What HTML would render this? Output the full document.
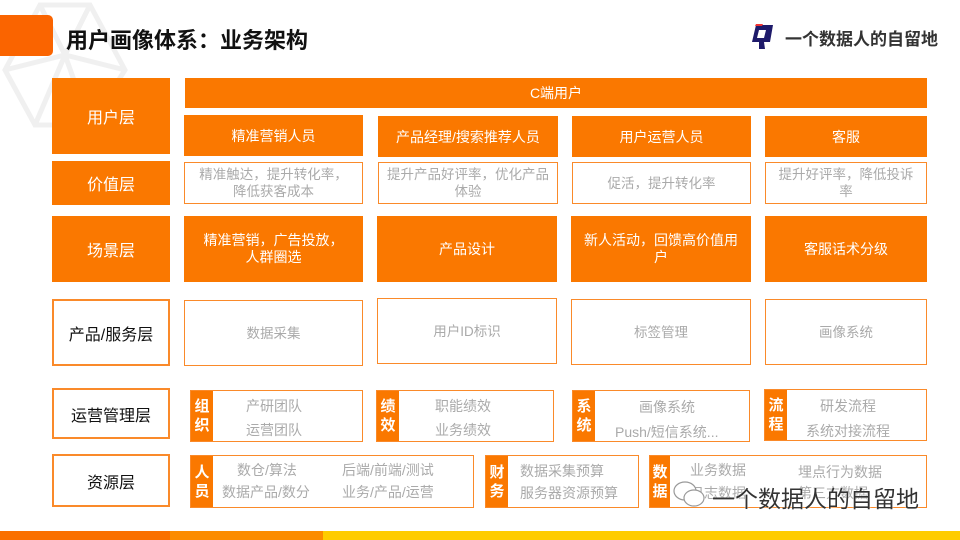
<!DOCTYPE html>
<html><head><meta charset="utf-8"><style>
*{margin:0;padding:0;box-sizing:border-box}
body{width:960px;height:540px;position:relative;overflow:hidden;background:#fff;font-family:"Liberation Sans","Noto Sans CJK SC",sans-serif}
.a{position:absolute;display:flex;align-items:center;justify-content:center;text-align:center}
.o{background:#fa7800;color:#fff;font-size:14px}
.w{background:#fff;border:1.5px solid #fa8a2a;color:#aaa;font-size:13.5px;line-height:17px}
.l{background:#fff;border:2px solid #fa8a2a;color:#111;font-size:16px}
.lo{background:#fa7800;color:#fff;font-size:16px}
.tag{position:absolute;left:0;top:0;bottom:0;width:22px;background:#fa7800;color:#fff;font-size:15px;font-weight:bold;line-height:19px;display:flex;align-items:center;justify-content:center;text-align:center}
.g{color:#aaa;font-size:14px;position:absolute;white-space:nowrap}
</style></head><body>
<svg style="position:absolute;left:0;top:0" width="140" height="140"><g fill="none" stroke="#f0f0f0" stroke-width="5"><path d="M40 5 L90 5 L125 70 L90 125 L35 125 L5 70 Z M40 5 L65 55 L90 5 M5 70 L65 55 L125 70 M65 55 L35 125 M65 55 L90 125"/></g></svg>
<div style="position:absolute;left:0;top:15px;width:53px;height:41px;background:#fa6400;border-radius:0 5px 5px 0"></div>
<div style="position:absolute;left:66px;top:23px;font-size:22px;font-weight:bold;color:#111">用户画像体系：业务架构</div>
<svg style="position:absolute;left:751px;top:22px" width="26" height="28"><path d="M5 3 L22 3 L19 20 L13 20 L14 27 L8 27 L8 20 L1 20 Z M8 8 L6 16 L13 16 L15 8 Z" fill="#1e1a6a" fill-rule="evenodd"/><path d="M5 2 L12 2 L11 4 L4 4Z" fill="#e33"/></svg>
<div style="position:absolute;left:785px;top:25px;font-size:17px;font-weight:bold;color:#333">一个数据人的自留地</div>

<div class="a lo" style="left:52px;top:78px;width:118px;height:76px">用户层</div>
<div class="a lo" style="left:52px;top:161px;width:118px;height:44px">价值层</div>
<div class="a lo" style="left:52px;top:216px;width:118px;height:66px">场景层</div>
<div class="a l" style="left:52px;top:299px;width:118px;height:67px">产品/服务层</div>
<div class="a l" style="left:52px;top:388px;width:118px;height:51px">运营管理层</div>
<div class="a l" style="left:52px;top:454px;width:118px;height:53px">资源层</div>

<div class="a o" style="left:185px;top:78px;width:742px;height:30px">C端用户</div>
<div class="a o" style="left:184px;top:115px;width:179px;height:41px">精准营销人员</div>
<div class="a o" style="left:378px;top:116px;width:180px;height:41px">产品经理/搜索推荐人员</div>
<div class="a o" style="left:572px;top:116px;width:179px;height:41px">用户运营人员</div>
<div class="a o" style="left:765px;top:116px;width:162px;height:41px">客服</div>

<div class="a w" style="left:184px;top:162px;width:179px;height:42px;padding:0 8px">精准触达，提升转化率，降低获客成本</div>
<div class="a w" style="left:378px;top:162px;width:180px;height:42px;padding:0 8px">提升产品好评率，优化产品体验</div>
<div class="a w" style="left:572px;top:162px;width:179px;height:42px">促活，提升转化率</div>
<div class="a w" style="left:765px;top:162px;width:162px;height:42px;padding:0 8px">提升好评率，降低投诉率</div>

<div class="a o" style="left:184px;top:216px;width:179px;height:66px;line-height:17px;padding:0 14px">精准营销，广告投放，人群圈选</div>
<div class="a o" style="left:377px;top:216px;width:180px;height:66px">产品设计</div>
<div class="a o" style="left:571px;top:216px;width:180px;height:66px;line-height:17px;padding:0 10px">新人活动，回馈高价值用户</div>
<div class="a o" style="left:765px;top:216px;width:162px;height:66px">客服话术分级</div>

<div class="a w" style="left:184px;top:300px;width:179px;height:66px">数据采集</div>
<div class="a w" style="left:377px;top:298px;width:180px;height:66px">用户ID标识</div>
<div class="a w" style="left:571px;top:299px;width:180px;height:66px">标签管理</div>
<div class="a w" style="left:765px;top:299px;width:162px;height:66px">画像系统</div>

<div class="w" style="position:absolute;left:190px;top:390px;width:173px;height:52px"><div class="tag">组<br>织</div><span class="g" style="left:55px;top:7px">产研团队</span><span class="g" style="left:55px;top:31px">运营团队</span></div>
<div class="w" style="position:absolute;left:376px;top:390px;width:178px;height:52px"><div class="tag">绩<br>效</div><span class="g" style="left:58px;top:7px">职能绩效</span><span class="g" style="left:58px;top:31px">业务绩效</span></div>
<div class="w" style="position:absolute;left:572px;top:390px;width:178px;height:52px"><div class="tag">系<br>统</div><span class="g" style="left:66px;top:8px">画像系统</span><span class="g" style="left:42px;top:33px">Push/短信系统...</span></div>
<div class="w" style="position:absolute;left:764px;top:389px;width:163px;height:52px"><div class="tag">流<br>程</div><span class="g" style="left:55px;top:8px">研发流程</span><span class="g" style="left:41px;top:33px">系统对接流程</span></div>

<div class="w" style="position:absolute;left:190px;top:455px;width:284px;height:53px"><div class="tag">人<br>员</div><span class="g" style="left:46px;top:6px">数仓/算法</span><span class="g" style="left:31px;top:28px">数据产品/数分</span><span class="g" style="left:151px;top:6px">后端/前端/测试</span><span class="g" style="left:151px;top:28px">业务/产品/运营</span></div>
<div class="w" style="position:absolute;left:485px;top:455px;width:154px;height:53px"><div class="tag">财<br>务</div><span class="g" style="left:34px;top:7px">数据采集预算</span><span class="g" style="left:34px;top:29px">服务器资源预算</span></div>
<div class="w" style="position:absolute;left:649px;top:455px;width:278px;height:53px"><div class="tag" style="width:20px">数<br>据</div><span class="g" style="left:40px;top:6px">业务数据</span><span class="g" style="left:148px;top:8px">埋点行为数据</span><span class="g" style="left:40px;top:29px">日志数据</span><span class="g" style="left:148px;top:29px">第三方数据</span></div>
<svg style="position:absolute;left:672px;top:480px" width="34" height="30"><g fill="#fff" stroke="#999" stroke-width="1.2"><ellipse cx="13" cy="11" rx="11" ry="9"/><ellipse cx="22" cy="18" rx="10" ry="8"/></g></svg>
<div style="position:absolute;left:712px;top:480px;font-size:23px;color:#333;white-space:nowrap;text-shadow:0 0 2px #fff">一个数据人的自留地</div>

<div style="position:absolute;left:0;top:531px;width:170px;height:9px;background:#fa7000"></div>
<div style="position:absolute;left:170px;top:531px;width:153px;height:9px;background:#fc8c00"></div>
<div style="position:absolute;left:323px;top:531px;width:637px;height:9px;background:#ffcc00"></div>
</body></html>
